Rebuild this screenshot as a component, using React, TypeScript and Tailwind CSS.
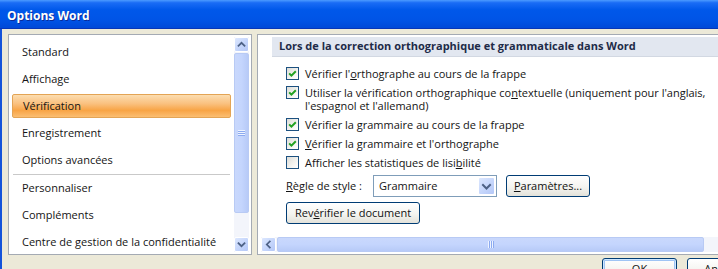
// Boîte de dialogue "Options Word" (style Office 2007 / XP Luna)
import React from 'react';

const navItems = [
  'Standard',
  'Affichage',
  'Vérification',
  'Enregistrement',
  'Options avancées',
  '---',
  'Personnaliser',
  'Compléments',
  'Centre de gestion de la confidentialité',
];

function Chevron({ dir }: { dir: 'up' | 'down' | 'left' }) {
  const d =
    dir === 'up' ? 'M4 9L7.5 5.5L11 9' : dir === 'down' ? 'M4 6L7.5 9.5L11 6' : 'M9 4L5.5 7.5L9 11';
  return (
    <svg width="15" height="15" viewBox="0 0 15 15" fill="none">
      <path d={d} stroke="#4D6185" strokeWidth={2} strokeLinecap="square" />
    </svg>
  );
}

function ScrollButton({ dir }: { dir: 'up' | 'down' | 'left' }) {
  return (
    <div className="w-[15px] h-[15px] shrink-0 rounded-[2px] border border-white bg-[linear-gradient(135deg,#DCE7FE_0%,#C3D4FB_60%,#B4C7F6_100%)] flex items-center justify-center">
      <Chevron dir={dir} />
    </div>
  );
}

function Checkbox({ checked }: { checked: boolean }) {
  return (
    <div className="w-[13px] h-[13px] shrink-0 border border-[#1C5180] bg-[linear-gradient(135deg,#DCDCD7_0%,#F4F4F1_60%,#FFFFFF_100%)] flex items-center justify-center">
      {checked && (
        <svg width="11" height="11" viewBox="0 0 11 11" fill="none">
          <path d="M2.2 5.4L4.4 7.6L8.8 3.2" stroke="#21A121" strokeWidth={2} />
        </svg>
      )}
    </div>
  );
}

function XpButton({ children, className = '' }: { children: React.ReactNode; className?: string }) {
  return (
    <div
      className={`flex items-center justify-center rounded-[3px] border border-[#003C74] bg-[linear-gradient(180deg,#FFFFFF_0%,#F4F4F0_55%,#E3E2DA_100%)] text-[#111] ${className}`}
    >
      {children}
    </div>
  );
}

function CheckRow({ checked, children }: { checked: boolean; children: React.ReactNode }) {
  return (
    <div className="flex items-start gap-[6px]">
      <Checkbox checked={checked} />
      <div className="leading-[13px]">{children}</div>
    </div>
  );
}

export default function App() {
  return (
    <div className="w-[718px] h-[269px] overflow-hidden bg-[#ECE9D8] font-['Open_Sans',sans-serif] text-[11px] text-[#141414]">
      <div className="w-[772px] h-[269px] flex flex-col">
        {/* barre de titre */}
        <div className="h-[29px] shrink-0 flex items-center pl-[7px] pt-[3px] border-b border-[#0736B8] bg-[linear-gradient(180deg,#4C9BFF_0%,#1A6CF5_10%,#0058EA_35%,#0054E6_70%,#0049D8_100%)]">
          <span className="text-white font-bold text-[12px] [text-shadow:1px_1px_0_#0A2C9A]">Options Word</span>
        </div>

        <div className="flex-1 flex flex-col border-l-2 border-r-2 border-[#1453DA] pl-[6px] pr-[8px] pt-[5px]">
          <div className="h-[221px] flex gap-[5px]">
            {/* panneau de gauche */}
            <div className="w-[244px] shrink-0 border border-[#A4AAB3] bg-white p-[2px] pl-0 flex">
              <div className="flex-1 flex flex-col pt-[2px] overflow-hidden">
                {navItems.map((item, i) =>
                  item === '---' ? (
                    <div key={i} className="h-[2px] mx-[4px] border-t border-[#C9C9C9]" />
                  ) : (
                    <div key={i} className="h-[27px] shrink-0 px-[3px]">
                      <div
                        className={`h-[24px] mt-[1px] pl-[10px] pt-[1px] flex items-center whitespace-nowrap ${
                          item === 'Vérification'
                            ? 'rounded-[2px] border border-[#E3A455] bg-[linear-gradient(180deg,#FCDDB0_0%,#FAC07E_40%,#F8A445_70%,#FBBE72_100%)] pl-[9px]'
                            : ''
                        }`}
                      >
                        {item}
                      </div>
                    </div>
                  )
                )}
              </div>
              {/* barre de défilement verticale */}
              <div className="w-[15px] flex flex-col bg-[#F3F5FB]">
                <ScrollButton dir="up" />
                <div className="h-[160px] mt-[1px] rounded-[2px] border border-[#B8CAF4] bg-[linear-gradient(90deg,#C9D8FC_0%,#C4D5FD_50%,#B7CAF7_100%)] flex items-center justify-center">
                  <div className="w-[7px] flex flex-col">
                    <div className="h-px bg-[#EEF4FF]" />
                    <div className="h-px bg-[#8CAAF0]" />
                    <div className="h-px bg-[#EEF4FF]" />
                    <div className="h-px bg-[#8CAAF0]" />
                    <div className="h-px bg-[#EEF4FF]" />
                    <div className="h-px bg-[#8CAAF0]" />
                  </div>
                </div>
                <div className="flex-1" />
                <ScrollButton dir="down" />
              </div>
            </div>

            {/* panneau de droite */}
            <div className="flex-1 border border-[#A4AAB3] bg-white pt-[2px] pb-[2px] pl-[3px] pr-[2px] flex flex-col">
              <div className="h-[200px] pl-[11px] overflow-hidden">
                <div className="h-[20px] pl-[7px] flex items-center bg-[#E2E7F0] border-b border-[#D2D8E2] font-bold text-[#1E2B48] whitespace-nowrap">
                  Lors de la correction orthographique et grammaticale dans Word
                </div>
                <div className="pl-[14px] pt-[10px] flex flex-col gap-[6px] whitespace-nowrap">
                  <CheckRow checked>
                    Vérifier l'<u className="underline">o</u>rthographe au cours de la frappe
                  </CheckRow>
                  <CheckRow checked>
                    Utiliser la vérification orthographique co<u className="underline">n</u>textuelle (uniquement pour l'anglais,
                    <br />
                    l'espagnol et l'allemand)
                  </CheckRow>
                  <CheckRow checked>
                    Vérifier la <u className="underline">g</u>rammaire au cours de la frappe
                  </CheckRow>
                  <CheckRow checked>
                    <u className="underline">V</u>érifier la grammaire et l'orthographe
                  </CheckRow>
                  <CheckRow checked={false}>
                    Afficher les statistiques de lisi<u className="underline">b</u>ilité
                  </CheckRow>
                </div>
                <div className="pl-[14px] mt-[6px] flex items-center h-[22px]">
                  <div className="w-[87px]">
                    <u className="underline">R</u>ègle de style :
                  </div>
                  <div className="w-[124px] h-[22px] border border-[#7F9DB9] bg-white flex items-center pl-[5px] pr-[1px]">
                    <span className="flex-1">Grammaire</span>
                    <div className="w-[17px] h-[18px] rounded-[2px] border border-white bg-[linear-gradient(135deg,#DCE7FE_0%,#C3D4FB_60%,#B4C7F6_100%)] flex items-center justify-center">
                      <Chevron dir="down" />
                    </div>
                  </div>
                  <XpButton className="ml-[9px] w-[84px] h-[22px]">
                    <span>
                      <u className="underline">P</u>aramètres...
                    </span>
                  </XpButton>
                </div>
                <div className="pl-[14px] mt-[5px]">
                  <XpButton className="w-[134px] h-[22px]">
                    <span>
                      Rev<u className="underline">é</u>rifier le document
                    </span>
                  </XpButton>
                </div>
              </div>
              {/* barre de défilement horizontale */}
              <div className="h-[15px] flex bg-[#F3F5FB]">
                <ScrollButton dir="left" />
                <div className="w-[427px] ml-px rounded-[2px] border border-[#B8CAF4] bg-[linear-gradient(180deg,#C9D8FC_0%,#C4D5FD_50%,#B7CAF7_100%)] flex items-center justify-center">
                  <div className="h-[7px] flex">
                    <div className="w-px bg-[#EEF4FF]" />
                    <div className="w-px bg-[#8CAAF0]" />
                    <div className="w-px bg-[#EEF4FF]" />
                    <div className="w-px bg-[#8CAAF0]" />
                    <div className="w-px bg-[#EEF4FF]" />
                    <div className="w-px bg-[#8CAAF0]" />
                  </div>
                </div>
                <div className="flex-1" />
              </div>
            </div>
          </div>

          {/* boutons */}
          <div className="mt-[3px] flex justify-end gap-[10px]">
            <XpButton className="w-[75px] h-[23px] shadow-[inset_0_0_0_1px_#CEE7FF,inset_0_0_0_2px_#9FC4F4] pb-[1px]">
              OK
            </XpButton>
            <XpButton className="w-[75px] h-[23px]">Annuler</XpButton>
          </div>
        </div>
      </div>
    </div>
  );
}
